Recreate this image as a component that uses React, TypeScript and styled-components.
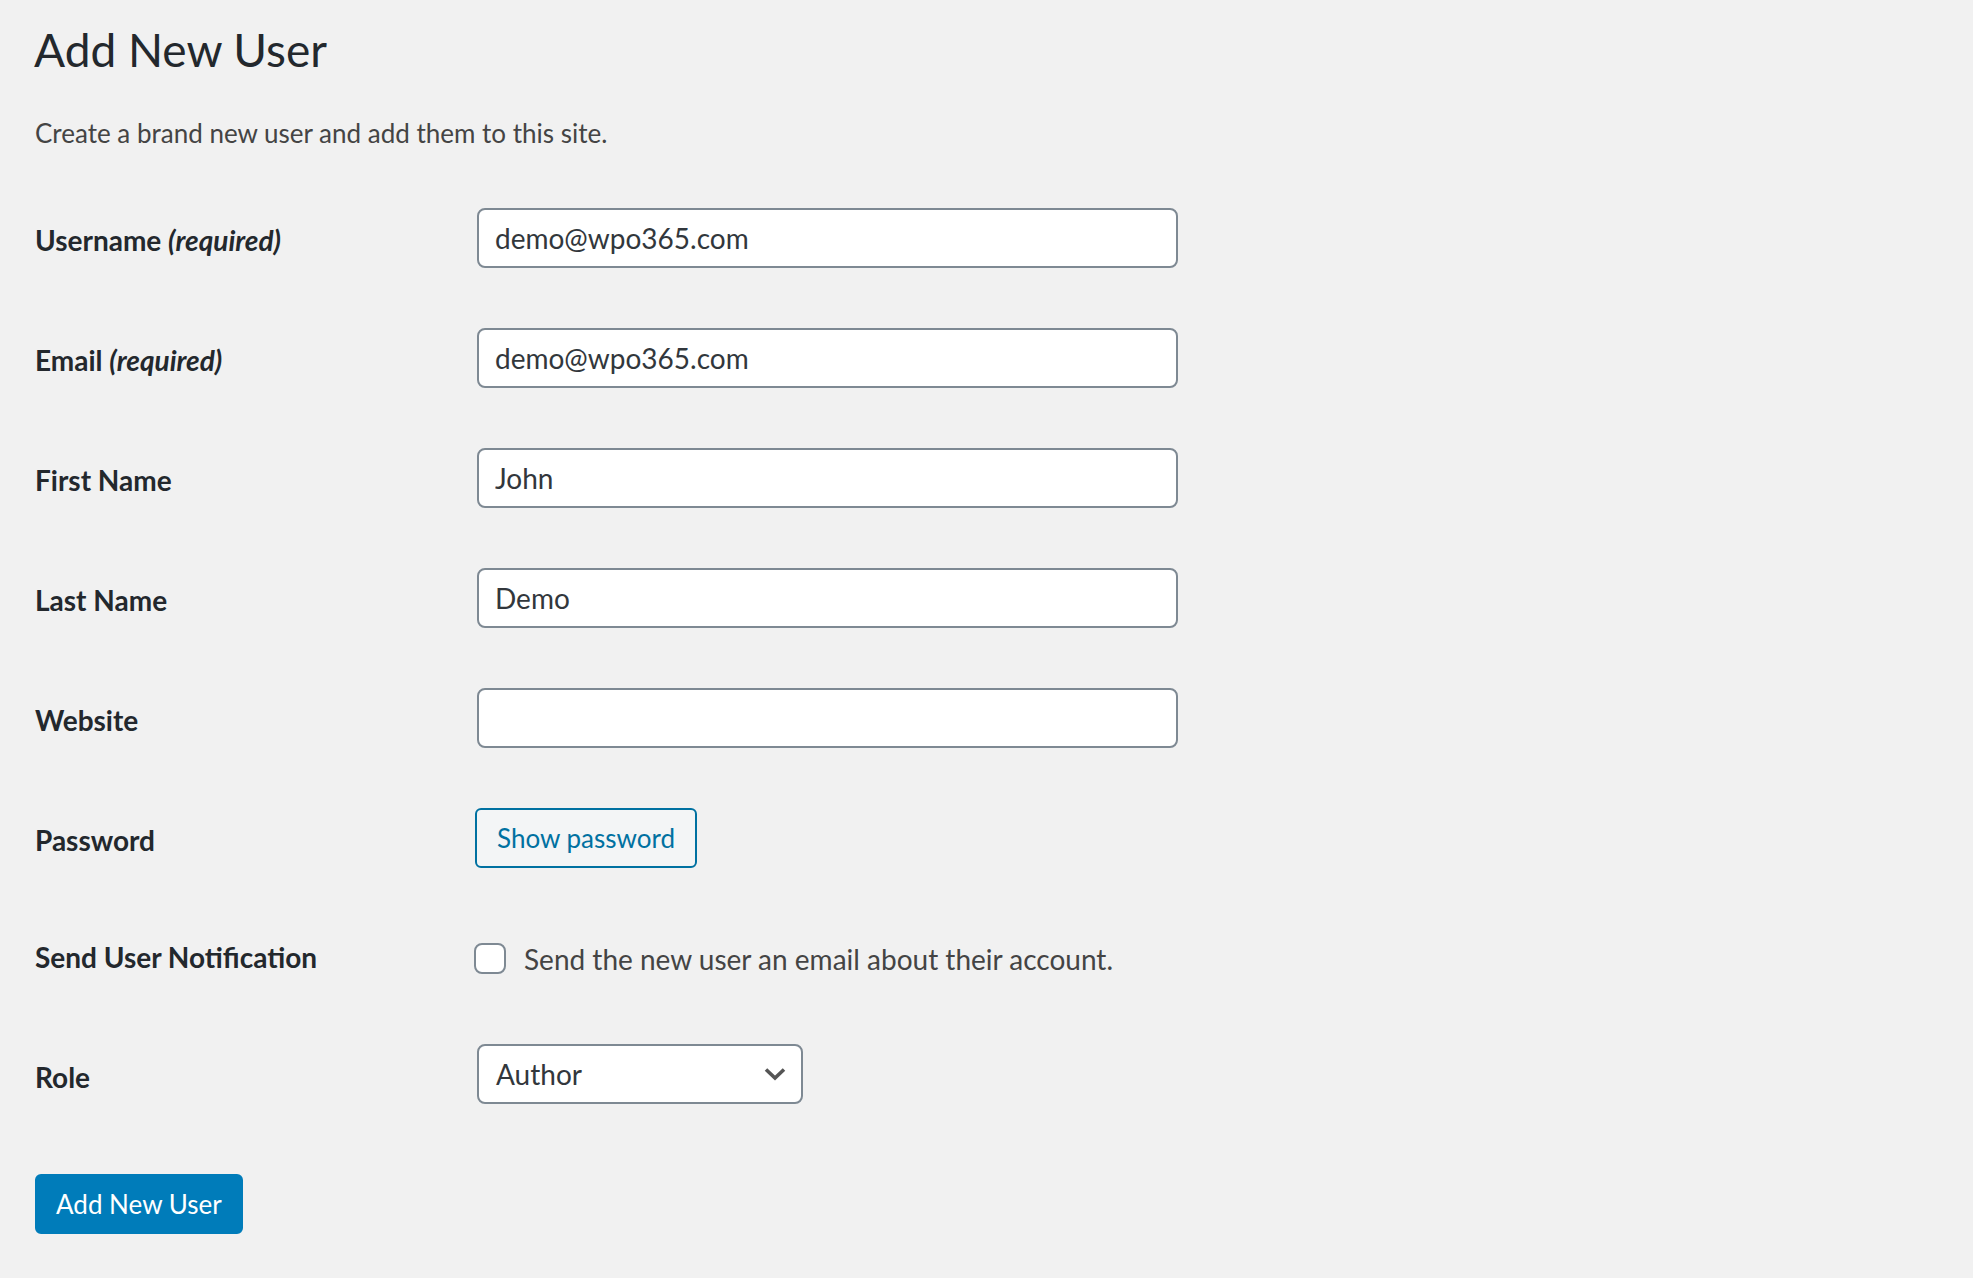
import React from "react";
import styled, { createGlobalStyle } from "styled-components";

const GlobalStyle = createGlobalStyle`
  html, body { margin: 0; padding: 0; }
  body {
    background: #f1f1f1;
    color: #444;
    font-family: Lato, Roboto, "Liberation Sans", sans-serif;
    min-height: 1278px;
  }
  * { box-sizing: border-box; }
`;

const Wrap = styled.main`
  padding: 0 0 0 35px;
`;

const Title = styled.h1`
  margin: 20px 0 0 -1px;
  font-size: 46px;
  line-height: 60px;
  font-weight: 400;
  color: #23282d;
`;

const Intro = styled.p`
  margin: 33px 0 0;
  font-size: 26px;
  line-height: 40px;
  color: #444;
`;

const Form = styled.form`
  margin-top: 25px;
  display: flex;
  flex-direction: column;
`;

const Row = styled.div`
  display: grid;
  grid-template-columns: 442px 1fr;
  padding: 30px 0;
`;

const Label = styled.label<{ $offset?: number }>`
  padding-top: ${(p) => p.$offset ?? 14}px;
  font-size: 28px;
  line-height: 36px;
  font-weight: 700;
  color: #23282d;
`;

const Note = styled.span`
  font-style: italic;
  font-weight: 700;
`;

const TextInput = styled.input`
  width: 701px;
  height: 60px;
  border: 2px solid #7e8993;
  border-radius: 8px;
  background: #fff;
  padding: 0 16px;
  font-family: inherit;
  font-size: 28px;
  color: #32373c;
  outline: none;
`;

const SecondaryButton = styled.button`
  margin-left: -2px;
  height: 60px;
  padding: 0 20px;
  border: 2px solid #0071a1;
  border-radius: 6px;
  background: #f3f5f6;
  color: #0071a1;
  font-family: inherit;
  font-size: 26px;
  cursor: pointer;
  justify-self: start;
`;

const CheckLine = styled.label`
  display: flex;
  align-items: flex-start;
  gap: 18px;
  height: 56px;
  margin-left: -3px;
  font-size: 28px;
  line-height: 62px;
  color: #444;
`;

const Checkbox = styled.span`
  flex: none;
  margin-top: 15px;
  width: 32px;
  height: 31px;
  border: 2px solid #7e8993;
  border-radius: 8px;
  background: #fff;
`;

const SelectBox = styled.div`
  width: 326px;
  height: 60px;
  border: 2px solid #7e8993;
  border-radius: 8px;
  background: #fff;
  padding: 0 15px 0 17px;
  display: flex;
  align-items: center;
  justify-content: space-between;
  font-size: 28px;
  color: #32373c;
  cursor: pointer;
`;

const Submit = styled.div`
  margin-top: 40px;
`;

const PrimaryButton = styled.button`
  height: 60px;
  padding: 0 19px;
  border: 2px solid #007cba;
  border-radius: 6px;
  background: #007cba;
  color: #fff;
  font-family: inherit;
  font-size: 26px;
  cursor: pointer;
`;

type Field = { label: string; required?: boolean; value: string };

const fields: Field[] = [
  { label: "Username", required: true, value: "demo@wpo365.com" },
  { label: "Email", required: true, value: "demo@wpo365.com" },
  { label: "First Name", value: "John" },
  { label: "Last Name", value: "Demo" },
  { label: "Website", value: "" },
];

function Chevron() {
  return (
    <svg width="22" height="14" viewBox="0 0 22 14" aria-hidden="true">
      <path d="M2 2.5 L11 11 L20 2.5" fill="none" stroke="#555" strokeWidth="3.6" />
    </svg>
  );
}

export default function App() {
  return (
    <Wrap>
      <GlobalStyle />
      <Title>Add New User</Title>
      <Intro>Create a brand new user and add them to this site.</Intro>
      <Form onSubmit={(e) => e.preventDefault()}>
        {fields.map((f) => (
          <Row key={f.label}>
            <Label>
              {f.label} {f.required && <Note>(required)</Note>}
            </Label>
            <TextInput defaultValue={f.value} />
          </Row>
        ))}
        <Row>
          <Label>Password</Label>
          <SecondaryButton type="button">Show password</SecondaryButton>
        </Row>
        <Row>
          <Label $offset={11}>Send User Notification</Label>
          <CheckLine>
            <Checkbox role="checkbox" aria-checked="false" />
            Send the new user an email about their account.
          </CheckLine>
        </Row>
        <Row>
          <Label $offset={15}>Role</Label>
          <SelectBox role="combobox">
            <span>Author</span>
            <Chevron />
          </SelectBox>
        </Row>
        <Submit>
          <PrimaryButton type="submit">Add New User</PrimaryButton>
        </Submit>
      </Form>
    </Wrap>
  );
}
